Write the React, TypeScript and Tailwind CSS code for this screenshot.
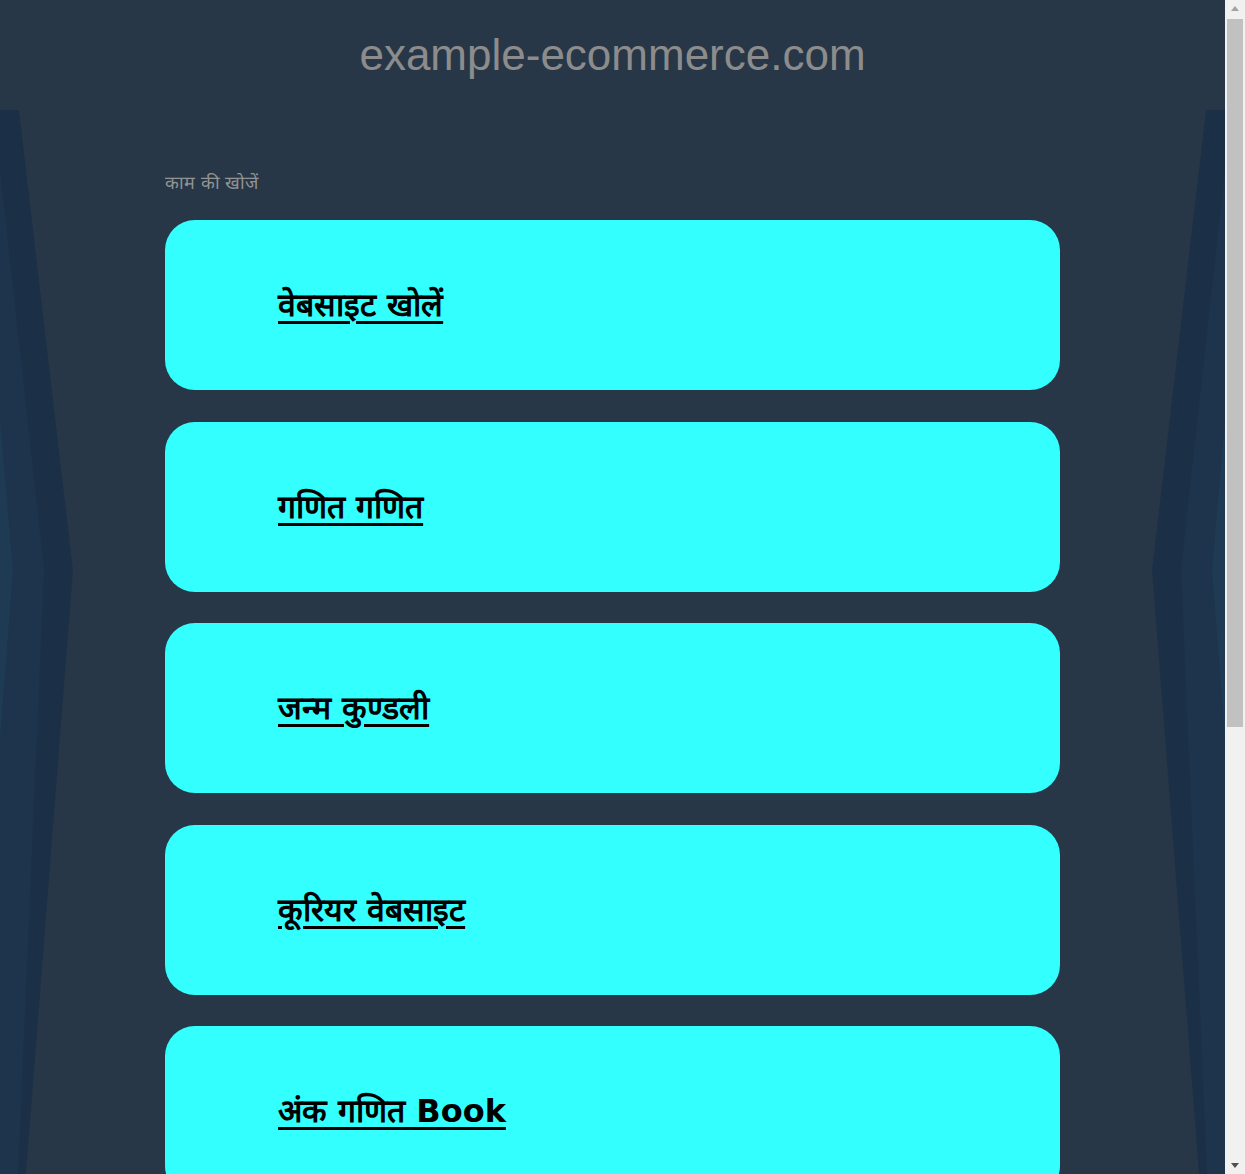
import React from "react";

/* ── Links shown as cards ─────────────────────────── */
const links = [
  "वेबसाइट खोलें",
  "गणित गणित",
  "जन्म कुण्डली",
  "कूरियर वेबसाइट",
  "अंक गणित Book",
  "हिंदी व्याकरण",
  "सामान्य ज्ञान",
  "ऑनलाइन फॉर्म",
];

const headFont = '"Liberation Sans", Arial, sans-serif';
const bodyFont = '"DejaVu Sans", sans-serif';

/* ── Chevron side decoration ──────────────────────── */
const SideDecor = () => (
  <svg
    className="absolute left-0 top-0 w-[1225px] h-[1064px] pointer-events-none"
    viewBox="0 0 1225 1064"
    preserveAspectRatio="none"
  >
    {/* left */}
    <polygon points="0,0 19,0 73,460 26,1064 0,1064" fill="#1b3047" />
    <polygon points="0,60 44,460 18,1064 0,1064" fill="#1d344c" />
    <polygon points="0,310 13,460 0,630" fill="#1f3a53" />
    {/* right */}
    <polygon points="1225,0 1206,0 1152,460 1199,1064 1225,1064" fill="#1b3047" />
    <polygon points="1225,60 1181,460 1207,1064 1225,1064" fill="#1d344c" />
    <polygon points="1225,310 1212,460 1225,630" fill="#1f3a53" />
  </svg>
);

/* ── Classic window scrollbar ─────────────────────── */
const Scrollbar = () => (
  <aside className="w-[20px] shrink-0 h-full bg-[#f1f1f1] flex flex-col items-center">
    <div className="h-[17px] w-full flex items-center justify-center">
      <svg width="8" height="5" viewBox="0 0 8 5">
        <polygon points="0,5 4,0 8,5" fill="#a3a3a3" />
      </svg>
    </div>
    <div className="w-[16px] h-[708px] bg-[#c1c1c1] mt-[2px]" />
    <div className="flex-1" />
    <div className="h-[17px] w-full flex items-center justify-center">
      <svg width="8" height="5" viewBox="0 0 8 5">
        <polygon points="0,0 8,0 4,5" fill="#505050" />
      </svg>
    </div>
  </aside>
);

export default function App() {
  return (
    <div className="h-[1174px] flex overflow-hidden bg-[#283747]" style={{ fontFamily: bodyFont }}>
      <div className="flex-1 min-w-0 h-full overflow-hidden">
        {/* Header */}
        <header className="h-[110px] flex items-center justify-center">
          <h1 className="text-[44px] text-[#8c8c8c] leading-none" style={{ fontFamily: headFont }}>
            example-ecommerce.com
          </h1>
        </header>

        {/* Main */}
        <main className="relative pb-[90px]">
          <SideDecor />
          <div className="relative w-[895px] mx-auto pt-[60px]">
            <p className="text-[18px] text-[#939393] leading-[26px] mb-[24px]">काम की खोजें</p>
            <div className="flex flex-col gap-[31.5px]">
              {links.map((label) => (
                <a
                  key={label}
                  href="#"
                  className="h-[170px] rounded-[30px] bg-[#33ffff] flex items-center pl-[113px]"
                >
                  <span className="text-[32px] font-bold text-black underline decoration-[3px] underline-offset-[5px]">
                    {label}
                  </span>
                </a>
              ))}
            </div>
          </div>
        </main>
      </div>
      <Scrollbar />
    </div>
  );
}
